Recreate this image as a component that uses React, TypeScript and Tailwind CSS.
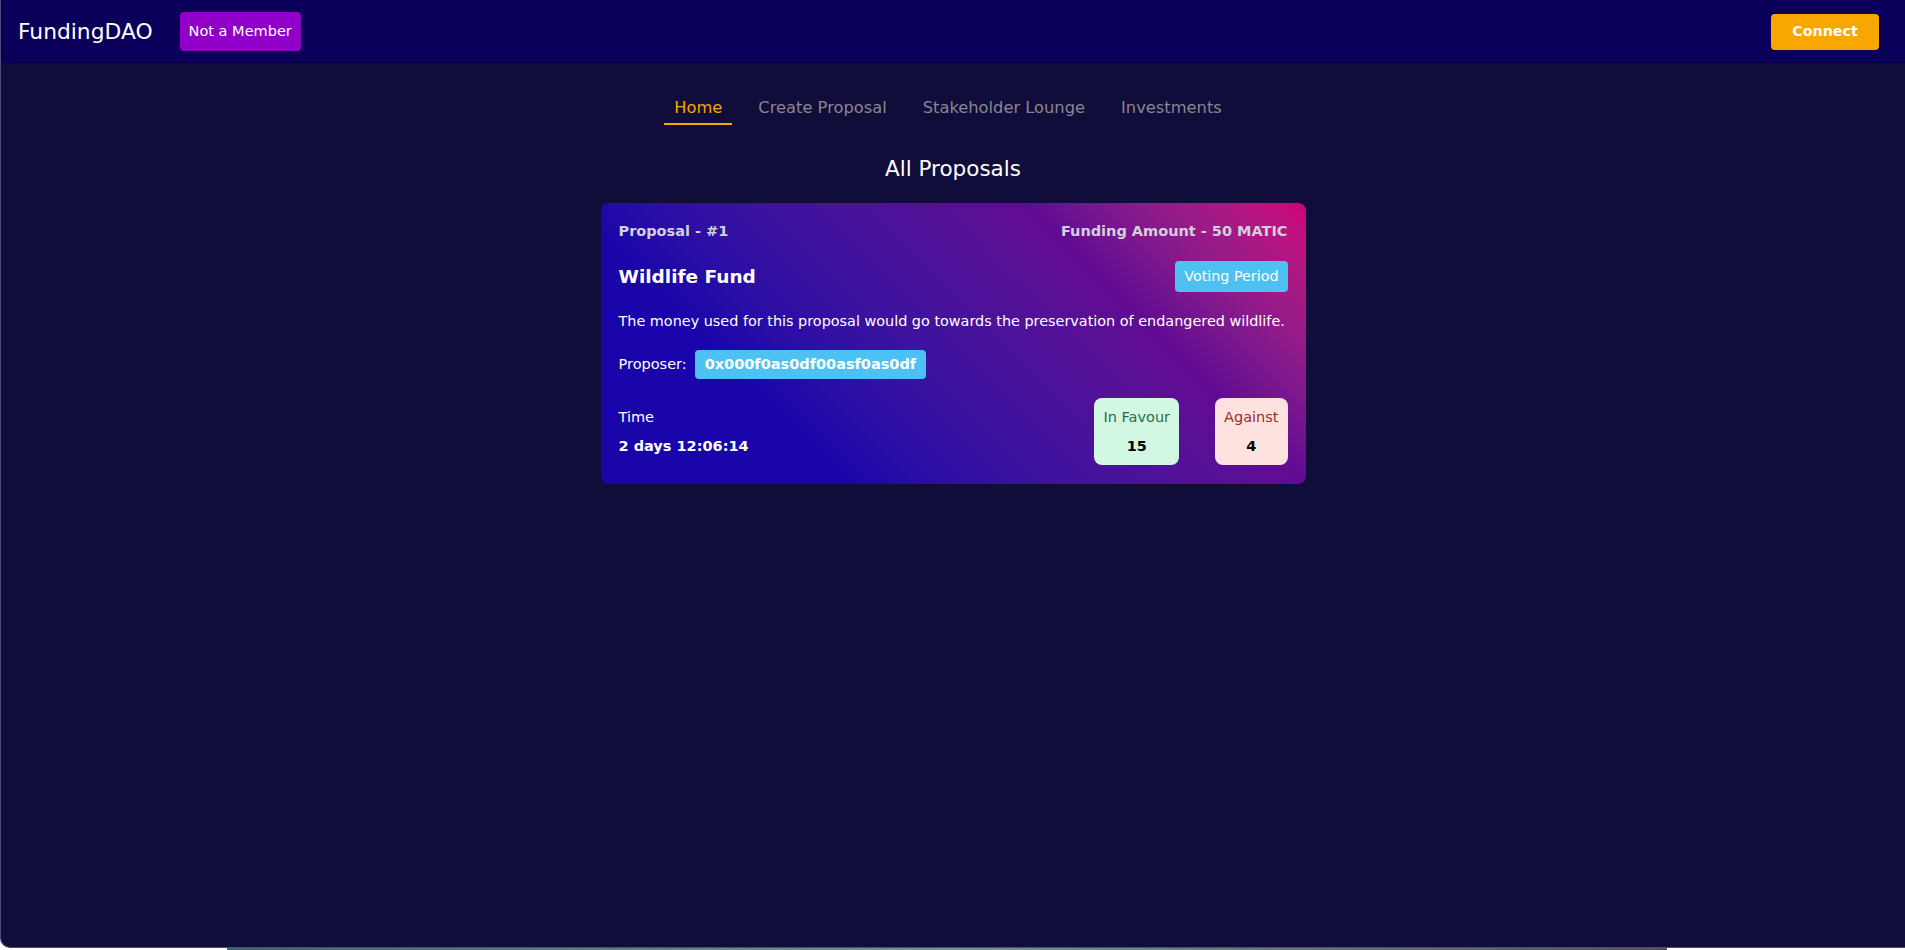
export default function App() {
    const tabs = ['Home', 'Create Proposal', 'Stakeholder Lounge', 'Investments'];

    return (
        <div className="h-[950px] flex flex-col bg-white font-['DejaVu_Sans',sans-serif] overflow-hidden">
            {/* window */}
            <div className="flex-1 flex flex-col bg-[#110d3a] border-l border-b border-[#4f4a78] rounded-bl-[10px] overflow-hidden">
                {/* Navbar */}
                <header className="h-[63px] shrink-0 bg-[#0b0059] flex items-center justify-between pl-[17px] pr-[26px]">
                    <div className="flex items-center gap-[27px]">
                        <span className="text-[21.8px] text-white leading-none">FundingDAO</span>
                        <button className="h-[39px] px-[9px] rounded-[4px] bg-[#9000c8] text-white text-[14.5px]">
                            Not a Member
                        </button>
                    </div>
                    <button className="h-[36px] w-[108px] rounded-[4px] bg-[#f8a600] text-white text-[14.3px] font-bold">
                        Connect
                    </button>
                </header>

                {/* Tabs */}
                <nav className="mt-[33px] pr-[10px] flex justify-center gap-4">
                    {tabs.map((tab, i) => (
                        <div
                            key={tab}
                            className={
                                i === 0
                                    ? 'px-[10px] pb-[3px] border-b-2 border-[#f8a600] text-[#f8a600] text-[16.3px] leading-6'
                                    : 'px-[10px] pb-[3px] border-b-2 border-transparent text-[#888690] text-[16.3px] leading-6'
                            }
                        >
                            {tab}
                        </div>
                    ))}
                </nav>

                <h2 className="mt-[29px] text-center text-white text-[21.5px] leading-[30px]">All Proposals</h2>

                {/* Proposal card */}
                <div className="mt-[19px] mx-auto w-[705px] rounded-[8px] bg-linear-45 from-[#1905a9] from-25% via-[#620a92] via-72% to-[#cf007a] px-[18px] pt-[18px] pb-[19px] text-white">
                    <div className="flex justify-between text-[14.5px] font-bold leading-5 text-[#d3d0de]">
                        <span>Proposal - #1</span>
                        <span>Funding Amount - 50 MATIC</span>
                    </div>

                    <div className="mt-[20px] flex items-center justify-between h-[31px]">
                        <span className="text-[18.5px] font-bold">Wildlife Fund</span>
                        <span className="h-[31px] px-[9px] flex items-center rounded-[4px] bg-[#4dc2f2] text-[14.3px]">
                            Voting Period
                        </span>
                    </div>

                    <p className="mt-[19px] text-[14.4px] leading-5 whitespace-nowrap">
                        The money used for this proposal would go towards the preservation of endangered wildlife.
                    </p>

                    <div className="mt-[19px] flex items-center gap-[8px] text-[14.5px]">
                        <span>Proposer:</span>
                        <span className="h-[29px] px-[10px] flex items-center rounded-[4px] bg-[#4dc2f2] font-bold">
                            0x000f0as0df00asf0as0df
                        </span>
                    </div>

                    <div className="mt-[19px] flex items-start justify-between">
                        <div className="pt-[9px] flex flex-col gap-[9px] text-[14.5px] leading-5">
                            <span>Time</span>
                            <span className="font-bold">2 days 12:06:14</span>
                        </div>
                        <div className="flex gap-[36px]">
                            <div className="px-[9px] py-[9px] flex flex-col items-center gap-[9px] rounded-[8px] bg-[#d2f8e4] text-[14.5px] leading-5">
                                <span className="text-[#2a6a4a]">In Favour</span>
                                <span className="font-bold text-black">15</span>
                            </div>
                            <div className="px-[9px] py-[9px] flex flex-col items-center gap-[9px] rounded-[8px] bg-[#fde2df] text-[14.5px] leading-5">
                                <span className="text-[#9b2c2c]">Against</span>
                                <span className="font-bold text-black">4</span>
                            </div>
                        </div>
                    </div>
                </div>
            </div>

            {/* bottom strip */}
            <div className="h-[2px] shrink-0 flex">
                <div className="ml-[227px] w-[1440px] bg-linear-to-r from-[#3f6964] via-[#6e9a8c] to-[#55574f]"></div>
            </div>
        </div>
    );
}
